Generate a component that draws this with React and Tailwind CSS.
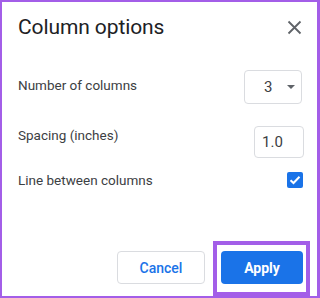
import React from "react";

export default function App() {
  return (
    <div
      className="w-[320px] h-[298px] bg-white border-[#a35ee8] border-l-[2px] border-t-[2px] border-r-[3px] border-b-[2px] flex flex-col overflow-hidden"
      style={{ fontFamily: "Roboto, 'Noto Sans', sans-serif" }}
    >
      <div className="flex items-center justify-between pl-[16px] pr-[15px] pt-[9px] h-[37px] box-content">
        <div className="text-[21px] leading-[28px] text-[#202124] tracking-[-0.1px]">Column options</div>
        <svg width="15" height="15" viewBox="0 0 15 15" className="mt-[1px]">
          <path d="M1.5 1.5 L13.5 13.5 M13.5 1.5 L1.5 13.5" stroke="#5f6368" strokeWidth="1.8" strokeLinecap="butt" />
        </svg>
      </div>

      <div className="mt-[28px] flex items-center justify-between pl-[16px] pr-[15px] h-[34px]">
        <div className="text-[13.5px] leading-[20px] text-[#3c4043] pb-[4px]">Number of columns</div>
        <div className="w-[58px] h-[34px] border border-[#dadce0] rounded-[4px] flex items-center pl-[19px] pr-[6px] justify-between">
          <span className="text-[15px] leading-[20px] text-[#3c4043]">3</span>
          <svg width="8" height="4" viewBox="0 0 8 4">
            <path d="M0 0 L8 0 L4 4 Z" fill="#5f6368" />
          </svg>
        </div>
      </div>

      <div className="mt-[22px] flex items-start justify-between pl-[16px] pr-[13px] h-[32px]">
        <div className="text-[13.5px] leading-[20px] text-[#3c4043] mt-[-1px]">Spacing (inches)</div>
        <div className="w-[50px] h-[32px] border border-[#dadce0] rounded-[4px] flex items-center pl-[7px]">
          <span className="text-[15px] leading-[20px] text-[#3c4043]">1.0</span>
        </div>
      </div>

      <div className="mt-[14px] flex items-center justify-between pl-[16px] pr-[14px] h-[16px]">
        <div className="text-[13.5px] leading-[20px] text-[#3c4043]">Line between columns</div>
        <div className="w-[16px] h-[16px] rounded-[2px] bg-[#1a73e8] flex items-center justify-center">
          <svg width="12" height="10" viewBox="0 0 12 10">
            <path d="M1.5 5.2 L4.5 8 L10.5 1.8" stroke="#ffffff" strokeWidth="2" fill="none" />
          </svg>
        </div>
      </div>

      <div className="mt-[53px] flex items-start justify-end pr-[7px]">
        <button className="mt-[10px] w-[88px] h-[33px] border border-[#dadce0] rounded-[4px] bg-white text-[#1a73e8] text-[14px] font-medium leading-[20px]">
          Cancel
        </button>
        <div className="ml-[8px] border-[4px] border-[#a35ee8] pl-[4px] pr-[3px] pt-[6px] pb-[8px]">
          <button className="w-[82px] h-[33px] rounded-[4px] bg-[#1a73e8] text-white text-[14px] font-bold leading-[20px]">
            Apply
          </button>
        </div>
      </div>
    </div>
  );
}
